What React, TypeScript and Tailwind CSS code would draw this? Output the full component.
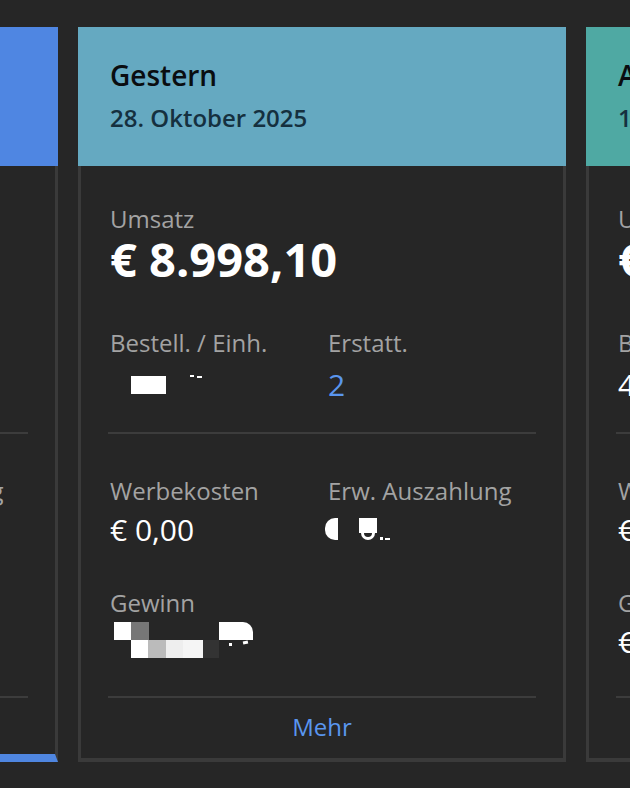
import React from "react";

type Card = {
  title: string;
  date: string;
  header: string;
  umsatz: string;
  bestell: React.ReactNode;
  erstatt: string;
  werbe: string;
  auszahlung: React.ReactNode;
  gewinn: React.ReactNode;
  selected?: boolean;
};

const font = { fontFamily: '"Open Sans", "Noto Sans", sans-serif' };

function Label({ children }: { children: React.ReactNode }) {
  return <div className="text-[24px] leading-[32px] text-[#a3a3a3] whitespace-nowrap">{children}</div>;
}

function Value({ children, blue }: { children: React.ReactNode; blue?: boolean }) {
  return (
    <div className={`text-[30px] leading-[40px] whitespace-nowrap ${blue ? "text-[#5a96ee]" : "text-white"}`}>
      {children}
    </div>
  );
}

function BestellRedacted() {
  return (
    <div className="h-[40px] flex items-start pl-[21px] pt-[10px]">
      <div className="mt-[1px] w-[35px] h-[18px] bg-white" />
      <div className="ml-[24px] w-[4px] h-[2px] bg-white" />
      <div className="ml-[3px] mt-[1px] w-[5px] h-[2px] bg-white" />
    </div>
  );
}

function AuszahlungRedacted() {
  return (
    <div className="h-[40px] flex items-start pt-[8px] ml-[-3px]">
      <div className="w-[13px] h-[22px] bg-white rounded-l-[10px]" />
      <div className="ml-[21px] flex flex-col">
        <div className="w-[18px] h-[15px] bg-white" />
        <div className="ml-[2px] w-[14px] h-[7px] border-b-[3px] border-x-[3px] border-white rounded-b-full" />
      </div>
      <div className="ml-[3px] mt-[19px] w-[3px] h-[3px] bg-white" />
      <div className="ml-[2px] mt-[20px] w-[5px] h-[2px] bg-white" />
    </div>
  );
}

function GewinnRedacted() {
  return (
    <div className="h-[40px] flex flex-col pl-[4px]">
      <div className="flex h-[18px]">
        <div className="w-[17px] bg-white" />
        <div className="w-[18px] bg-[#777777]" />
        <div className="w-[70px]" />
        <div className="w-[34px] bg-white rounded-tr-[10px]" />
      </div>
      <div className="flex h-[18px] items-start">
        <div className="w-[17px]" />
        <div className="w-[17px] h-[18px] bg-white" />
        <div className="w-[18px] h-[18px] bg-[#bbbbbb]" />
        <div className="w-[17px] h-[18px] bg-[#eeeeee]" />
        <div className="w-[20px] h-[18px] bg-[#f5f5f5]" />
        <div className="w-[16px] h-[18px] bg-[#333333]" />
        <div className="ml-[10px] mt-[3px] w-[3px] h-[3px] bg-white" />
        <div className="ml-[11px] mt-[1px] w-[5px] h-[3px] bg-white -rotate-12" />
      </div>
    </div>
  );
}

function CardView({ c }: { c: Card }) {
  return (
    <div className="w-[488px] shrink-0 flex flex-col">
      <div className={`${c.header} h-[139px] pl-[32px] pt-[30px]`}>
        <div className="text-[28px] leading-[36px] font-semibold text-[#0a0d10] whitespace-nowrap">{c.title}</div>
        <div className="mt-[10px] text-[24px] leading-[30px] font-semibold text-[#15303f] whitespace-nowrap">{c.date}</div>
      </div>
      <div
        className={`h-[596px] border-x-[3px] border-[#3a3a3a] px-[29px] pt-[39px] flex flex-col ${
          c.selected ? "border-b-[8px] border-b-[#4f86e0]" : "border-b-[4px]"
        }`}
      >
        <div className="text-[24px] leading-[28px] text-[#a3a3a3] whitespace-nowrap">Umsatz</div>
        <div className="text-[47px] leading-[52px] font-bold text-white whitespace-nowrap">{c.umsatz}</div>

        <div className="mt-[42px] grid grid-cols-[218px_1fr]">
          <div>
            <Label>Bestell. / Einh.</Label>
            <div className="mt-[6px]">{c.bestell}</div>
          </div>
          <div>
            <Label>Erstatt.</Label>
            <div className="mt-[6px]">
              <Value blue>{c.erstatt}</Value>
            </div>
          </div>
        </div>

        <div className="mt-[27px] -mx-[2px] h-[2px] bg-[#3c3c3c]" />

        <div className="mt-[41px] grid grid-cols-[218px_1fr]">
          <div>
            <Label>Werbekosten</Label>
            <div className="mt-[3px]">
              <Value>{c.werbe}</Value>
            </div>
          </div>
          <div>
            <Label>Erw. Auszahlung</Label>
            <div className="mt-[3px]">{c.auszahlung}</div>
          </div>
        </div>

        <div className="mt-[37px]">
          <Label>Gewinn</Label>
          <div className="mt-[3px]">{c.gewinn}</div>
        </div>

        <div className="mt-[34px] -mx-[2px] h-[2px] bg-[#3c3c3c]" />

        <div className="mt-[13px] text-center text-[24px] leading-[32px] text-[#5a96ee]">Mehr</div>
      </div>
    </div>
  );
}

const cards: Card[] = [
  {
    title: "Heute",
    date: "29. Oktober 2025",
    header: "bg-[#4f86e2]",
    umsatz: "€ 2.431,50",
    bestell: <Value>58 / 64</Value>,
    erstatt: "0",
    werbe: "€ 0,00",
    auszahlung: <Value>€ 1.912,30</Value>,
    gewinn: <Value>€ 702,18</Value>,
    selected: true,
  },
  {
    title: "Gestern",
    date: "28. Oktober 2025",
    header: "bg-[#65a9c1]",
    umsatz: "€ 8.998,10",
    bestell: <BestellRedacted />,
    erstatt: "2",
    werbe: "€ 0,00",
    auszahlung: <AuszahlungRedacted />,
    gewinn: <GewinnRedacted />,
  },
  {
    title: "Aktueller Monat",
    date: "1.–29. Oktober 2025",
    header: "bg-[#4fa9a3]",
    umsatz: "€ 212.540,80",
    bestell: <Value>4.812 / 5.120</Value>,
    erstatt: "37",
    werbe: "€ 0,00",
    auszahlung: <Value>€ 168.220,45</Value>,
    gewinn: <Value>€ 61.930,12</Value>,
  },
];

export default function App() {
  return (
    <div className="w-[630px] h-[788px] bg-[#262626] overflow-hidden" style={font}>
      <div className="flex gap-[20px] pt-[27px] ml-[-430px]">
        {cards.map((c) => (
          <CardView key={c.title} c={c} />
        ))}
      </div>
    </div>
  );
}
